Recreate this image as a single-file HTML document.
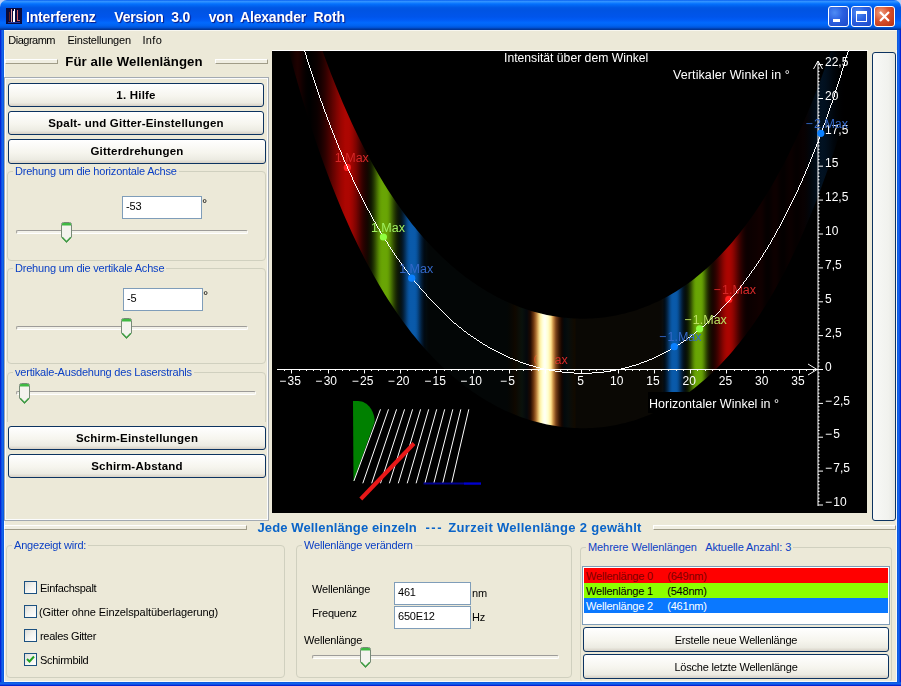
<!DOCTYPE html>
<html><head><meta charset="utf-8"><title>Interferenz</title>
<style>
*{box-sizing:border-box;margin:0;padding:0}
html,body{width:901px;height:686px;overflow:hidden}
body{position:relative;background:#ece9d8;font-family:"Liberation Sans",sans-serif;font-size:11px;color:#000}
.abs{position:absolute}
#title{position:absolute;left:0;top:0;width:901px;height:30px;border-radius:7px 7px 0 0;
background:linear-gradient(to bottom,#0058ee 0%,#3593ff 4%,#288eff 7%,#127dff 10%,#036ffc 14%,#0262ee 20%,#0057e5 26%,#0054e3 34%,#0055eb 56%,#005bf5 66%,#026afe 76%,#0062ef 86%,#0052d6 92%,#0040ab 96%,#003092 100%)}
#title .t{position:absolute;left:26px;top:9px;color:#fff;font-weight:bold;font-size:14px;white-space:pre;text-shadow:1px 1px 1px #0a1883;letter-spacing:-0.17px}
#bl{position:absolute;left:0;top:30px;width:4px;height:656px;background:linear-gradient(to right,#0019cf 0,#0831d9 25%,#166aee 50%,#0855dd 100%)}
#br{position:absolute;left:897px;top:30px;width:4px;height:656px;background:linear-gradient(to left,#0019cf 0,#0831d9 25%,#166aee 50%,#0855dd 100%)}
#bb{position:absolute;left:0;top:682px;width:901px;height:4px;background:linear-gradient(to top,#0019cf 0,#0831d9 25%,#166aee 50%,#0855dd 100%)}
.tb{position:absolute;top:6px;width:21px;height:21px;border:1px solid #fff;border-radius:3px;
background:radial-gradient(circle at 30% 30%,#4e8cf5 0%,#2a5fe0 45%,#1c48c8 100%)}
.tb.x{background:radial-gradient(circle at 30% 30%,#f0a080 0%,#d8502c 45%,#b83010 100%)}
#menu{position:absolute;left:4px;top:30px;width:893px;height:20px;background:#ece9d8;border-top:1px solid #f8f7f0}
#menu span{position:absolute;top:3px;font-size:11px}
.btn{position:absolute;border:1px solid #0c3360;border-radius:3px;background:linear-gradient(to bottom,#fff 0%,#f6f5ee 55%,#ecebe2 85%,#d6d0c5 100%);
text-align:center;font-weight:bold;font-size:11.5px;letter-spacing:0.2px;white-space:nowrap}
.btn.r{font-weight:normal;font-size:11px;letter-spacing:-0.2px;padding-top:1px}
.gb{position:absolute;border:1px solid #d0d0bf;border-radius:4px}
.gb>.l{position:absolute;left:5px;top:-8px;background:#ece9d8;padding:0 2px 0 2px;color:#0c40c4;font-size:11px;white-space:pre;line-height:14px;letter-spacing:-0.2px}
.inp{position:absolute;background:#fff;border:1px solid #7f9db9;font-size:11px;padding:3px 0 0 3px;letter-spacing:-0.2px}
.trk{position:absolute;height:4px;border:1px solid #9d9c99;border-bottom-color:#fff;border-right-color:#fff;border-radius:2px;background:#f3f2ea}
.th{position:absolute;width:11px;height:21px}
.cb{position:absolute;width:13px;height:13px;border:1px solid #1c5180;background:linear-gradient(135deg,#dcdcd7 0%,#f3f3ef 50%,#fff 100%)}
.lb{position:absolute;white-space:nowrap;font-size:11px;letter-spacing:-0.2px}
.bh{top:520px;font-weight:bold;font-size:13px;color:#0a64c8;white-space:pre}
.etch{position:absolute;height:5px;border-top:1px solid #fff;border-left:1px solid #fff;border-bottom:1px solid #a09c88;border-right:1px solid #a09c88;background:#f0eee2}
</style></head><body>
<div class="abs" style="left:0;top:0;width:901px;height:10px;background:#b9cef6"></div><div id="title">
<svg class="abs" style="left:6px;top:8px" width="16" height="16"><rect width="16" height="16" fill="#0a0a3c"/><rect x="5" y="1" width="1" height="13" fill="#e8a0a0"/><rect x="7" y="3" width="2" height="11" fill="#fff"/><rect x="8" y="1" width="1" height="3" fill="#fff"/><rect x="11" y="2" width="1" height="11" fill="#d06060"/><rect x="12" y="12" width="2" height="1" fill="#d06060"/><rect x="2" y="14" width="12" height="1" fill="#2838a0"/><rect x="3" y="4" width="1" height="9" fill="#602020"/></svg>
<div class="t">Interferenz     Version  3.0     von  Alexander  Roth</div>
<div class="tb" style="left:828px"><div class="abs" style="left:4px;top:12px;width:7px;height:3px;background:#fff"></div></div>
<div class="tb" style="left:851px"><div class="abs" style="left:4px;top:4px;width:11px;height:11px;border:1px solid #fff;border-top-width:3px"></div></div>
<div class="tb x" style="left:874px"><svg class="abs" style="left:0;top:0" width="19" height="19"><path d="M5 5 L14 14 M14 5 L5 14" stroke="#fff" stroke-width="2.2"/></svg></div>
</div>
<div class="abs" style="left:4px;top:30px;width:1px;height:652px;background:#f6f8fc"></div><div class="abs" style="left:896px;top:30px;width:1px;height:652px;background:#f6f8fc"></div><div class="abs" style="left:4px;top:681px;width:893px;height:1px;background:#f6f8fc"></div><div id="bl"></div><div id="br"></div><div id="bb"></div>
<div class="abs" style="left:5px;top:49px;width:891px;height:1px;background:#f7f6ef"></div><div id="menu"><span style="left:4.3px;letter-spacing:-0.5px">Diagramm</span><span style="left:63.4px;letter-spacing:-0.2px">Einstellungen</span><span style="left:138.4px;letter-spacing:0.4px">Info</span></div>

<!-- left heading -->
<div class="etch" style="left:5px;top:59px;width:53px"></div>
<div class="etch" style="left:215px;top:59px;width:53px"></div>
<div class="abs" style="left:2px;top:54px;width:264px;text-align:center;font-weight:bold;font-size:13.2px;letter-spacing:0.1px">Für alle Wellenlängen</div>
<!-- left panel -->
<div class="abs" style="left:4px;top:77px;width:265px;height:444px;border:1px solid #a3aab2;box-shadow:inset 0 0 0 1px #fbfcfd"></div>
<div class="btn" style="left:8px;top:83px;width:256px;height:24px;line-height:22px">1. Hilfe</div>
<div class="btn" style="left:8px;top:111px;width:256px;height:24px;line-height:22px">Spalt- und Gitter-Einstellungen</div>
<div class="btn" style="left:8px;top:139px;width:258px;height:25px;line-height:23px">Gitterdrehungen</div>

<div class="gb" style="left:7px;top:171px;width:259px;height:90px"><div class="l">Drehung um die horizontale Achse</div></div>
<div class="inp" style="left:122px;top:196px;width:80px;height:23px">-53</div>
<div class="lb" style="left:202px;top:196px;font-size:13px">°</div>
<div class="trk" style="left:16px;top:230px;width:232px"></div>
<svg class="th" style="left:61px;top:222px" viewBox="0 0 11 21"><path d="M0.5 2.5 Q0.5 0.5 2.5 0.5 H8.5 Q10.5 0.5 10.5 2.5 V15 L5.5 20.5 L0.5 15 Z" fill="#f4f3ee" stroke="#778a77"/><path d="M1 3 V1.5 Q1 1 2 1 H9 Q10 1 10 1.5 V3.5 H1Z" fill="#3fb843"/><path d="M1.2 15.2 L5.5 19.8 L9.8 15.2" stroke="#3fa043" fill="none" stroke-width="1.4"/></svg>

<div class="gb" style="left:7px;top:268px;width:259px;height:96px"><div class="l">Drehung um die vertikale Achse</div></div>
<div class="inp" style="left:123px;top:288px;width:80px;height:23px">-5</div>
<div class="lb" style="left:203px;top:288px;font-size:13px">°</div>
<div class="trk" style="left:16px;top:326px;width:232px"></div>
<svg class="th" style="left:121px;top:318px" viewBox="0 0 11 21"><path d="M0.5 2.5 Q0.5 0.5 2.5 0.5 H8.5 Q10.5 0.5 10.5 2.5 V15 L5.5 20.5 L0.5 15 Z" fill="#f4f3ee" stroke="#778a77"/><path d="M1 3 V1.5 Q1 1 2 1 H9 Q10 1 10 1.5 V3.5 H1Z" fill="#3fb843"/><path d="M1.2 15.2 L5.5 19.8 L9.8 15.2" stroke="#3fa043" fill="none" stroke-width="1.4"/></svg>

<div class="gb" style="left:7px;top:372px;width:259px;height:60px"><div class="l">vertikale-Ausdehung des Laserstrahls</div></div>
<div class="trk" style="left:16px;top:391px;width:240px"></div>
<svg class="th" style="left:19px;top:383px" viewBox="0 0 11 21"><path d="M0.5 2.5 Q0.5 0.5 2.5 0.5 H8.5 Q10.5 0.5 10.5 2.5 V15 L5.5 20.5 L0.5 15 Z" fill="#f4f3ee" stroke="#778a77"/><path d="M1 3 V1.5 Q1 1 2 1 H9 Q10 1 10 1.5 V3.5 H1Z" fill="#3fb843"/><path d="M1.2 15.2 L5.5 19.8 L9.8 15.2" stroke="#3fa043" fill="none" stroke-width="1.4"/></svg>
<div class="abs" style="left:6px;top:422px;width:261px;height:12px;background:#ece9d8"></div>
<div class="btn" style="left:8px;top:426px;width:258px;height:24px;line-height:22px">Schirm-Einstellungen</div>
<div class="btn" style="left:8px;top:454px;width:258px;height:24px;line-height:22px">Schirm-Abstand</div>

<svg id="cv" width="595" height="462" viewBox="0 0 595 462" style="position:absolute;left:272px;top:51px;background:#000;font-family:'Liberation Sans',sans-serif;font-size:12px" fill="#fff">
<defs><linearGradient id="sp" gradientUnits="userSpaceOnUse" x1="0" y1="0" x2="595" y2="0"><stop offset="0.0000" stop-color="#000000"/><stop offset="0.0017" stop-color="#000000"/><stop offset="0.0034" stop-color="#000000"/><stop offset="0.0050" stop-color="#000000"/><stop offset="0.0067" stop-color="#000000"/><stop offset="0.0084" stop-color="#000000"/><stop offset="0.0101" stop-color="#000000"/><stop offset="0.0118" stop-color="#000000"/><stop offset="0.0134" stop-color="#000000"/><stop offset="0.0151" stop-color="#000000"/><stop offset="0.0168" stop-color="#000000"/><stop offset="0.0185" stop-color="#000000"/><stop offset="0.0202" stop-color="#000000"/><stop offset="0.0218" stop-color="#000000"/><stop offset="0.0235" stop-color="#010000"/><stop offset="0.0252" stop-color="#010000"/><stop offset="0.0269" stop-color="#030000"/><stop offset="0.0286" stop-color="#040000"/><stop offset="0.0303" stop-color="#070000"/><stop offset="0.0319" stop-color="#0a0000"/><stop offset="0.0336" stop-color="#0d0000"/><stop offset="0.0353" stop-color="#110000"/><stop offset="0.0370" stop-color="#150000"/><stop offset="0.0387" stop-color="#190000"/><stop offset="0.0403" stop-color="#1b0000"/><stop offset="0.0420" stop-color="#1d0100"/><stop offset="0.0437" stop-color="#1d0100"/><stop offset="0.0454" stop-color="#1b0000"/><stop offset="0.0471" stop-color="#190000"/><stop offset="0.0487" stop-color="#150000"/><stop offset="0.0504" stop-color="#110000"/><stop offset="0.0521" stop-color="#0d0000"/><stop offset="0.0538" stop-color="#0a0000"/><stop offset="0.0555" stop-color="#070000"/><stop offset="0.0571" stop-color="#040000"/><stop offset="0.0588" stop-color="#030000"/><stop offset="0.0605" stop-color="#010000"/><stop offset="0.0622" stop-color="#010000"/><stop offset="0.0639" stop-color="#000000"/><stop offset="0.0655" stop-color="#020000"/><stop offset="0.0672" stop-color="#030000"/><stop offset="0.0689" stop-color="#050000"/><stop offset="0.0706" stop-color="#060000"/><stop offset="0.0723" stop-color="#080000"/><stop offset="0.0739" stop-color="#090000"/><stop offset="0.0756" stop-color="#0b0000"/><stop offset="0.0773" stop-color="#0e0000"/><stop offset="0.0790" stop-color="#110000"/><stop offset="0.0807" stop-color="#140000"/><stop offset="0.0824" stop-color="#180000"/><stop offset="0.0840" stop-color="#1c0100"/><stop offset="0.0857" stop-color="#210100"/><stop offset="0.0874" stop-color="#260100"/><stop offset="0.0891" stop-color="#2c0100"/><stop offset="0.0908" stop-color="#320100"/><stop offset="0.0924" stop-color="#390100"/><stop offset="0.0941" stop-color="#3f0200"/><stop offset="0.0958" stop-color="#460200"/><stop offset="0.0975" stop-color="#4d0200"/><stop offset="0.0992" stop-color="#540200"/><stop offset="0.1008" stop-color="#5b0301"/><stop offset="0.1025" stop-color="#630301"/><stop offset="0.1042" stop-color="#6a0301"/><stop offset="0.1059" stop-color="#710301"/><stop offset="0.1076" stop-color="#790401"/><stop offset="0.1092" stop-color="#800401"/><stop offset="0.1109" stop-color="#870401"/><stop offset="0.1126" stop-color="#8d0401"/><stop offset="0.1143" stop-color="#940501"/><stop offset="0.1160" stop-color="#9a0501"/><stop offset="0.1176" stop-color="#9f0501"/><stop offset="0.1193" stop-color="#a30501"/><stop offset="0.1210" stop-color="#a70501"/><stop offset="0.1227" stop-color="#ac0602"/><stop offset="0.1244" stop-color="#ac0602"/><stop offset="0.1261" stop-color="#ac0602"/><stop offset="0.1277" stop-color="#ac0602"/><stop offset="0.1294" stop-color="#ac0602"/><stop offset="0.1311" stop-color="#a90501"/><stop offset="0.1328" stop-color="#a30501"/><stop offset="0.1345" stop-color="#9d0501"/><stop offset="0.1361" stop-color="#960501"/><stop offset="0.1378" stop-color="#8d0401"/><stop offset="0.1395" stop-color="#840401"/><stop offset="0.1412" stop-color="#7b0401"/><stop offset="0.1429" stop-color="#700301"/><stop offset="0.1445" stop-color="#640301"/><stop offset="0.1462" stop-color="#590301"/><stop offset="0.1479" stop-color="#4d0200"/><stop offset="0.1496" stop-color="#420200"/><stop offset="0.1513" stop-color="#370200"/><stop offset="0.1529" stop-color="#2e0200"/><stop offset="0.1546" stop-color="#270200"/><stop offset="0.1563" stop-color="#200300"/><stop offset="0.1580" stop-color="#1b0400"/><stop offset="0.1597" stop-color="#160500"/><stop offset="0.1613" stop-color="#120800"/><stop offset="0.1630" stop-color="#100c00"/><stop offset="0.1647" stop-color="#0f1100"/><stop offset="0.1664" stop-color="#0f1800"/><stop offset="0.1681" stop-color="#152201"/><stop offset="0.1697" stop-color="#1d2d01"/><stop offset="0.1714" stop-color="#253b01"/><stop offset="0.1731" stop-color="#2f4a02"/><stop offset="0.1748" stop-color="#3a5b02"/><stop offset="0.1765" stop-color="#456c03"/><stop offset="0.1782" stop-color="#4f7d03"/><stop offset="0.1798" stop-color="#598c04"/><stop offset="0.1815" stop-color="#619804"/><stop offset="0.1832" stop-color="#66a004"/><stop offset="0.1849" stop-color="#68a404"/><stop offset="0.1866" stop-color="#69a505"/><stop offset="0.1882" stop-color="#69a505"/><stop offset="0.1899" stop-color="#69a505"/><stop offset="0.1916" stop-color="#69a505"/><stop offset="0.1933" stop-color="#68a304"/><stop offset="0.1950" stop-color="#649e04"/><stop offset="0.1966" stop-color="#5e9404"/><stop offset="0.1983" stop-color="#558604"/><stop offset="0.2000" stop-color="#4b7603"/><stop offset="0.2017" stop-color="#406503"/><stop offset="0.2034" stop-color="#355402"/><stop offset="0.2050" stop-color="#2b4402"/><stop offset="0.2067" stop-color="#223602"/><stop offset="0.2084" stop-color="#1a2903"/><stop offset="0.2101" stop-color="#131f04"/><stop offset="0.2118" stop-color="#0e1806"/><stop offset="0.2134" stop-color="#0a140a"/><stop offset="0.2151" stop-color="#07120f"/><stop offset="0.2168" stop-color="#051318"/><stop offset="0.2185" stop-color="#041623"/><stop offset="0.2202" stop-color="#041d32"/><stop offset="0.2218" stop-color="#042544"/><stop offset="0.2235" stop-color="#052f58"/><stop offset="0.2252" stop-color="#063a6d"/><stop offset="0.2269" stop-color="#074582"/><stop offset="0.2286" stop-color="#084e94"/><stop offset="0.2303" stop-color="#0955a1"/><stop offset="0.2319" stop-color="#0959a9"/><stop offset="0.2336" stop-color="#0a5aaa"/><stop offset="0.2353" stop-color="#0a5aaa"/><stop offset="0.2370" stop-color="#0a5aaa"/><stop offset="0.2387" stop-color="#0a5aaa"/><stop offset="0.2403" stop-color="#0959a9"/><stop offset="0.2420" stop-color="#0955a1"/><stop offset="0.2437" stop-color="#084e94"/><stop offset="0.2454" stop-color="#074482"/><stop offset="0.2471" stop-color="#06396d"/><stop offset="0.2487" stop-color="#052e58"/><stop offset="0.2504" stop-color="#032343"/><stop offset="0.2521" stop-color="#021a32"/><stop offset="0.2538" stop-color="#021223"/><stop offset="0.2555" stop-color="#010c17"/><stop offset="0.2571" stop-color="#00080f"/><stop offset="0.2588" stop-color="#030b0f"/><stop offset="0.2605" stop-color="#03090b"/><stop offset="0.2622" stop-color="#030709"/><stop offset="0.2639" stop-color="#030607"/><stop offset="0.2655" stop-color="#030606"/><stop offset="0.2672" stop-color="#030606"/><stop offset="0.2689" stop-color="#030606"/><stop offset="0.2706" stop-color="#030606"/><stop offset="0.2723" stop-color="#030606"/><stop offset="0.2739" stop-color="#030606"/><stop offset="0.2756" stop-color="#030606"/><stop offset="0.2773" stop-color="#030606"/><stop offset="0.2790" stop-color="#030606"/><stop offset="0.2807" stop-color="#030606"/><stop offset="0.2824" stop-color="#030606"/><stop offset="0.2840" stop-color="#030606"/><stop offset="0.2857" stop-color="#030606"/><stop offset="0.2874" stop-color="#030606"/><stop offset="0.2891" stop-color="#030606"/><stop offset="0.2908" stop-color="#030606"/><stop offset="0.2924" stop-color="#030606"/><stop offset="0.2941" stop-color="#030606"/><stop offset="0.2958" stop-color="#030606"/><stop offset="0.2975" stop-color="#030606"/><stop offset="0.2992" stop-color="#030606"/><stop offset="0.3008" stop-color="#030606"/><stop offset="0.3025" stop-color="#030606"/><stop offset="0.3042" stop-color="#030606"/><stop offset="0.3059" stop-color="#030606"/><stop offset="0.3076" stop-color="#030606"/><stop offset="0.3092" stop-color="#030606"/><stop offset="0.3109" stop-color="#030606"/><stop offset="0.3126" stop-color="#030606"/><stop offset="0.3143" stop-color="#030606"/><stop offset="0.3160" stop-color="#030606"/><stop offset="0.3176" stop-color="#030606"/><stop offset="0.3193" stop-color="#030606"/><stop offset="0.3210" stop-color="#030606"/><stop offset="0.3227" stop-color="#030606"/><stop offset="0.3244" stop-color="#030606"/><stop offset="0.3261" stop-color="#030606"/><stop offset="0.3277" stop-color="#030606"/><stop offset="0.3294" stop-color="#030606"/><stop offset="0.3311" stop-color="#030606"/><stop offset="0.3328" stop-color="#030606"/><stop offset="0.3345" stop-color="#030606"/><stop offset="0.3361" stop-color="#030606"/><stop offset="0.3378" stop-color="#030606"/><stop offset="0.3395" stop-color="#030606"/><stop offset="0.3412" stop-color="#030606"/><stop offset="0.3429" stop-color="#030606"/><stop offset="0.3445" stop-color="#030606"/><stop offset="0.3462" stop-color="#030606"/><stop offset="0.3479" stop-color="#030606"/><stop offset="0.3496" stop-color="#030606"/><stop offset="0.3513" stop-color="#030606"/><stop offset="0.3529" stop-color="#030606"/><stop offset="0.3546" stop-color="#030606"/><stop offset="0.3563" stop-color="#030606"/><stop offset="0.3580" stop-color="#030606"/><stop offset="0.3597" stop-color="#030606"/><stop offset="0.3613" stop-color="#030606"/><stop offset="0.3630" stop-color="#030606"/><stop offset="0.3647" stop-color="#030606"/><stop offset="0.3664" stop-color="#030606"/><stop offset="0.3681" stop-color="#030606"/><stop offset="0.3697" stop-color="#030606"/><stop offset="0.3714" stop-color="#030606"/><stop offset="0.3731" stop-color="#030606"/><stop offset="0.3748" stop-color="#030606"/><stop offset="0.3765" stop-color="#030606"/><stop offset="0.3782" stop-color="#030606"/><stop offset="0.3798" stop-color="#030606"/><stop offset="0.3815" stop-color="#030606"/><stop offset="0.3832" stop-color="#030606"/><stop offset="0.3849" stop-color="#030606"/><stop offset="0.3866" stop-color="#030606"/><stop offset="0.3882" stop-color="#030606"/><stop offset="0.3899" stop-color="#030606"/><stop offset="0.3916" stop-color="#030606"/><stop offset="0.3933" stop-color="#030606"/><stop offset="0.3950" stop-color="#030606"/><stop offset="0.3966" stop-color="#040605"/><stop offset="0.3983" stop-color="#050604"/><stop offset="0.4000" stop-color="#060603"/><stop offset="0.4017" stop-color="#080703"/><stop offset="0.4034" stop-color="#090702"/><stop offset="0.4050" stop-color="#0b0701"/><stop offset="0.4067" stop-color="#0d0700"/><stop offset="0.4084" stop-color="#0f0800"/><stop offset="0.4101" stop-color="#0e0901"/><stop offset="0.4118" stop-color="#0d0a03"/><stop offset="0.4134" stop-color="#0c0c05"/><stop offset="0.4151" stop-color="#0c0d07"/><stop offset="0.4168" stop-color="#0b0f08"/><stop offset="0.4185" stop-color="#0a100a"/><stop offset="0.4202" stop-color="#09110c"/><stop offset="0.4218" stop-color="#080f0c"/><stop offset="0.4235" stop-color="#070d0c"/><stop offset="0.4252" stop-color="#060b0c"/><stop offset="0.4269" stop-color="#05090c"/><stop offset="0.4286" stop-color="#05080c"/><stop offset="0.4303" stop-color="#0c0808"/><stop offset="0.4319" stop-color="#140804"/><stop offset="0.4336" stop-color="#1b0801"/><stop offset="0.4353" stop-color="#2e1103"/><stop offset="0.4370" stop-color="#461f07"/><stop offset="0.4387" stop-color="#5d2d0b"/><stop offset="0.4403" stop-color="#763e13"/><stop offset="0.4420" stop-color="#915723"/><stop offset="0.4437" stop-color="#ab7032"/><stop offset="0.4454" stop-color="#c5904a"/><stop offset="0.4471" stop-color="#deb365"/><stop offset="0.4487" stop-color="#eed183"/><stop offset="0.4504" stop-color="#fbeca1"/><stop offset="0.4521" stop-color="#fff7b8"/><stop offset="0.4538" stop-color="#fffbcc"/><stop offset="0.4555" stop-color="#ffffe1"/><stop offset="0.4571" stop-color="#ffffeb"/><stop offset="0.4588" stop-color="#fffff5"/><stop offset="0.4605" stop-color="#ffffe8"/><stop offset="0.4622" stop-color="#ffffdc"/><stop offset="0.4639" stop-color="#ffffd0"/><stop offset="0.4655" stop-color="#fff7bd"/><stop offset="0.4672" stop-color="#ffeda7"/><stop offset="0.4689" stop-color="#ffe491"/><stop offset="0.4706" stop-color="#e8be6f"/><stop offset="0.4723" stop-color="#d1984e"/><stop offset="0.4739" stop-color="#b47a3a"/><stop offset="0.4756" stop-color="#965d29"/><stop offset="0.4773" stop-color="#784119"/><stop offset="0.4790" stop-color="#643312"/><stop offset="0.4807" stop-color="#50260b"/><stop offset="0.4824" stop-color="#3c1905"/><stop offset="0.4840" stop-color="#2d1103"/><stop offset="0.4857" stop-color="#1e0a01"/><stop offset="0.4874" stop-color="#120501"/><stop offset="0.4891" stop-color="#0b0706"/><stop offset="0.4908" stop-color="#04090a"/><stop offset="0.4924" stop-color="#030a0c"/><stop offset="0.4941" stop-color="#050b0c"/><stop offset="0.4958" stop-color="#060c0c"/><stop offset="0.4975" stop-color="#070d0c"/><stop offset="0.4992" stop-color="#090d0a"/><stop offset="0.5008" stop-color="#0a0c08"/><stop offset="0.5025" stop-color="#0c0c07"/><stop offset="0.5042" stop-color="#0d0b05"/><stop offset="0.5059" stop-color="#0f0b03"/><stop offset="0.5076" stop-color="#100a01"/><stop offset="0.5092" stop-color="#120a00"/><stop offset="0.5109" stop-color="#0a0804"/><stop offset="0.5126" stop-color="#0a0804"/><stop offset="0.5143" stop-color="#0a0804"/><stop offset="0.5160" stop-color="#0a0804"/><stop offset="0.5176" stop-color="#0a0804"/><stop offset="0.5193" stop-color="#0a0804"/><stop offset="0.5210" stop-color="#0a0804"/><stop offset="0.5227" stop-color="#0a0804"/><stop offset="0.5244" stop-color="#0a0804"/><stop offset="0.5261" stop-color="#0a0804"/><stop offset="0.5277" stop-color="#0a0804"/><stop offset="0.5294" stop-color="#0a0804"/><stop offset="0.5311" stop-color="#0a0804"/><stop offset="0.5328" stop-color="#0a0804"/><stop offset="0.5345" stop-color="#0a0804"/><stop offset="0.5361" stop-color="#0a0804"/><stop offset="0.5378" stop-color="#0a0804"/><stop offset="0.5395" stop-color="#0a0804"/><stop offset="0.5412" stop-color="#0a0804"/><stop offset="0.5429" stop-color="#0a0804"/><stop offset="0.5445" stop-color="#0a0804"/><stop offset="0.5462" stop-color="#0a0804"/><stop offset="0.5479" stop-color="#0a0804"/><stop offset="0.5496" stop-color="#0a0804"/><stop offset="0.5513" stop-color="#0a0804"/><stop offset="0.5529" stop-color="#0a0804"/><stop offset="0.5546" stop-color="#0a0804"/><stop offset="0.5563" stop-color="#0a0804"/><stop offset="0.5580" stop-color="#0a0804"/><stop offset="0.5597" stop-color="#0a0804"/><stop offset="0.5613" stop-color="#0a0804"/><stop offset="0.5630" stop-color="#0a0804"/><stop offset="0.5647" stop-color="#0a0804"/><stop offset="0.5664" stop-color="#0a0804"/><stop offset="0.5681" stop-color="#0a0804"/><stop offset="0.5697" stop-color="#0a0804"/><stop offset="0.5714" stop-color="#0a0804"/><stop offset="0.5731" stop-color="#0a0804"/><stop offset="0.5748" stop-color="#0a0804"/><stop offset="0.5765" stop-color="#0a0804"/><stop offset="0.5782" stop-color="#0a0804"/><stop offset="0.5798" stop-color="#0a0804"/><stop offset="0.5815" stop-color="#0a0804"/><stop offset="0.5832" stop-color="#0a0804"/><stop offset="0.5849" stop-color="#0a0804"/><stop offset="0.5866" stop-color="#0a0804"/><stop offset="0.5882" stop-color="#0a0804"/><stop offset="0.5899" stop-color="#0a0804"/><stop offset="0.5916" stop-color="#0a0804"/><stop offset="0.5933" stop-color="#0a0804"/><stop offset="0.5950" stop-color="#0a0804"/><stop offset="0.5966" stop-color="#0a0804"/><stop offset="0.5983" stop-color="#0a0804"/><stop offset="0.6000" stop-color="#0a0804"/><stop offset="0.6017" stop-color="#0a0804"/><stop offset="0.6034" stop-color="#0a0804"/><stop offset="0.6050" stop-color="#0a0804"/><stop offset="0.6067" stop-color="#0a0804"/><stop offset="0.6084" stop-color="#0a0804"/><stop offset="0.6101" stop-color="#0a0804"/><stop offset="0.6118" stop-color="#0a0804"/><stop offset="0.6134" stop-color="#0a0804"/><stop offset="0.6151" stop-color="#0a0804"/><stop offset="0.6168" stop-color="#0a0804"/><stop offset="0.6185" stop-color="#0a0804"/><stop offset="0.6202" stop-color="#0a0804"/><stop offset="0.6218" stop-color="#0a0804"/><stop offset="0.6235" stop-color="#0a0804"/><stop offset="0.6252" stop-color="#0a0804"/><stop offset="0.6269" stop-color="#0a0804"/><stop offset="0.6286" stop-color="#0a0804"/><stop offset="0.6303" stop-color="#0a0804"/><stop offset="0.6319" stop-color="#0a0804"/><stop offset="0.6336" stop-color="#0a0804"/><stop offset="0.6353" stop-color="#0a0804"/><stop offset="0.6370" stop-color="#0a0804"/><stop offset="0.6387" stop-color="#0a0804"/><stop offset="0.6403" stop-color="#0a0804"/><stop offset="0.6420" stop-color="#0a0804"/><stop offset="0.6437" stop-color="#0a0804"/><stop offset="0.6454" stop-color="#0a0804"/><stop offset="0.6471" stop-color="#0a0804"/><stop offset="0.6487" stop-color="#0a0804"/><stop offset="0.6504" stop-color="#0a0804"/><stop offset="0.6521" stop-color="#0a0805"/><stop offset="0.6538" stop-color="#0a0907"/><stop offset="0.6555" stop-color="#0a0b0a"/><stop offset="0.6571" stop-color="#0a0d0f"/><stop offset="0.6588" stop-color="#010a12"/><stop offset="0.6605" stop-color="#01101e"/><stop offset="0.6622" stop-color="#02182d"/><stop offset="0.6639" stop-color="#032241"/><stop offset="0.6655" stop-color="#052e58"/><stop offset="0.6672" stop-color="#063b70"/><stop offset="0.6689" stop-color="#084888"/><stop offset="0.6706" stop-color="#09529b"/><stop offset="0.6723" stop-color="#0958a6"/><stop offset="0.6739" stop-color="#0a5aaa"/><stop offset="0.6756" stop-color="#0a5aaa"/><stop offset="0.6773" stop-color="#0a5aaa"/><stop offset="0.6790" stop-color="#0959a9"/><stop offset="0.6807" stop-color="#0956a3"/><stop offset="0.6824" stop-color="#084e94"/><stop offset="0.6840" stop-color="#07437f"/><stop offset="0.6857" stop-color="#063667"/><stop offset="0.6874" stop-color="#052a4f"/><stop offset="0.6891" stop-color="#041f39"/><stop offset="0.6908" stop-color="#031627"/><stop offset="0.6924" stop-color="#041119"/><stop offset="0.6941" stop-color="#050f0f"/><stop offset="0.6958" stop-color="#081009"/><stop offset="0.6975" stop-color="#0c1605"/><stop offset="0.6992" stop-color="#131f03"/><stop offset="0.7008" stop-color="#1b2c02"/><stop offset="0.7025" stop-color="#263d02"/><stop offset="0.7042" stop-color="#335002"/><stop offset="0.7059" stop-color="#416603"/><stop offset="0.7076" stop-color="#4e7b03"/><stop offset="0.7092" stop-color="#5a8e04"/><stop offset="0.7109" stop-color="#639c04"/><stop offset="0.7126" stop-color="#68a404"/><stop offset="0.7143" stop-color="#69a505"/><stop offset="0.7160" stop-color="#69a505"/><stop offset="0.7176" stop-color="#69a505"/><stop offset="0.7193" stop-color="#69a505"/><stop offset="0.7210" stop-color="#68a404"/><stop offset="0.7227" stop-color="#639c04"/><stop offset="0.7244" stop-color="#5a8e04"/><stop offset="0.7261" stop-color="#4e7b03"/><stop offset="0.7277" stop-color="#416603"/><stop offset="0.7294" stop-color="#335002"/><stop offset="0.7311" stop-color="#2a3c01"/><stop offset="0.7328" stop-color="#212b01"/><stop offset="0.7345" stop-color="#1a1e00"/><stop offset="0.7361" stop-color="#171300"/><stop offset="0.7378" stop-color="#160c00"/><stop offset="0.7395" stop-color="#170700"/><stop offset="0.7412" stop-color="#1b0400"/><stop offset="0.7429" stop-color="#200300"/><stop offset="0.7445" stop-color="#280200"/><stop offset="0.7462" stop-color="#300200"/><stop offset="0.7479" stop-color="#3b0200"/><stop offset="0.7496" stop-color="#460200"/><stop offset="0.7513" stop-color="#530200"/><stop offset="0.7529" stop-color="#600301"/><stop offset="0.7546" stop-color="#6d0301"/><stop offset="0.7563" stop-color="#7a0401"/><stop offset="0.7580" stop-color="#870401"/><stop offset="0.7597" stop-color="#920501"/><stop offset="0.7613" stop-color="#9c0501"/><stop offset="0.7630" stop-color="#a40501"/><stop offset="0.7647" stop-color="#a90501"/><stop offset="0.7664" stop-color="#ab0501"/><stop offset="0.7681" stop-color="#ab0501"/><stop offset="0.7697" stop-color="#a80501"/><stop offset="0.7714" stop-color="#a20501"/><stop offset="0.7731" stop-color="#9a0501"/><stop offset="0.7748" stop-color="#900501"/><stop offset="0.7765" stop-color="#840401"/><stop offset="0.7782" stop-color="#780401"/><stop offset="0.7798" stop-color="#6a0301"/><stop offset="0.7815" stop-color="#5d0301"/><stop offset="0.7832" stop-color="#500200"/><stop offset="0.7849" stop-color="#440200"/><stop offset="0.7866" stop-color="#380100"/><stop offset="0.7882" stop-color="#2e0100"/><stop offset="0.7899" stop-color="#250100"/><stop offset="0.7916" stop-color="#1d0100"/><stop offset="0.7933" stop-color="#170000"/><stop offset="0.7950" stop-color="#120000"/><stop offset="0.7966" stop-color="#0e0000"/><stop offset="0.7983" stop-color="#0c0000"/><stop offset="0.8000" stop-color="#0b0000"/><stop offset="0.8017" stop-color="#0b0000"/><stop offset="0.8034" stop-color="#0c0000"/><stop offset="0.8050" stop-color="#0b0000"/><stop offset="0.8067" stop-color="#0c0000"/><stop offset="0.8084" stop-color="#0d0000"/><stop offset="0.8101" stop-color="#0d0000"/><stop offset="0.8118" stop-color="#0e0000"/><stop offset="0.8134" stop-color="#0e0000"/><stop offset="0.8151" stop-color="#0f0000"/><stop offset="0.8168" stop-color="#100000"/><stop offset="0.8185" stop-color="#110000"/><stop offset="0.8202" stop-color="#110000"/><stop offset="0.8218" stop-color="#100000"/><stop offset="0.8235" stop-color="#0f0000"/><stop offset="0.8252" stop-color="#0d0000"/><stop offset="0.8269" stop-color="#0a0000"/><stop offset="0.8286" stop-color="#080000"/><stop offset="0.8303" stop-color="#060000"/><stop offset="0.8319" stop-color="#050000"/><stop offset="0.8336" stop-color="#050000"/><stop offset="0.8353" stop-color="#050000"/><stop offset="0.8370" stop-color="#070000"/><stop offset="0.8387" stop-color="#080000"/><stop offset="0.8403" stop-color="#0a0000"/><stop offset="0.8420" stop-color="#0c0000"/><stop offset="0.8437" stop-color="#0d0000"/><stop offset="0.8454" stop-color="#0d0000"/><stop offset="0.8471" stop-color="#0d0000"/><stop offset="0.8487" stop-color="#0c0000"/><stop offset="0.8504" stop-color="#0a0000"/><stop offset="0.8521" stop-color="#080000"/><stop offset="0.8538" stop-color="#060000"/><stop offset="0.8555" stop-color="#050000"/><stop offset="0.8571" stop-color="#040000"/><stop offset="0.8588" stop-color="#040000"/><stop offset="0.8605" stop-color="#040000"/><stop offset="0.8622" stop-color="#050000"/><stop offset="0.8639" stop-color="#070000"/><stop offset="0.8655" stop-color="#080000"/><stop offset="0.8672" stop-color="#090000"/><stop offset="0.8689" stop-color="#0a0000"/><stop offset="0.8706" stop-color="#0b0000"/><stop offset="0.8723" stop-color="#0a0000"/><stop offset="0.8739" stop-color="#0a0000"/><stop offset="0.8756" stop-color="#080000"/><stop offset="0.8773" stop-color="#070000"/><stop offset="0.8790" stop-color="#060000"/><stop offset="0.8807" stop-color="#050000"/><stop offset="0.8824" stop-color="#050000"/><stop offset="0.8840" stop-color="#050000"/><stop offset="0.8857" stop-color="#060000"/><stop offset="0.8874" stop-color="#070000"/><stop offset="0.8891" stop-color="#070001"/><stop offset="0.8908" stop-color="#080101"/><stop offset="0.8924" stop-color="#080102"/><stop offset="0.8941" stop-color="#080102"/><stop offset="0.8958" stop-color="#070203"/><stop offset="0.8975" stop-color="#060204"/><stop offset="0.8992" stop-color="#050305"/><stop offset="0.9008" stop-color="#040407"/><stop offset="0.9025" stop-color="#030409"/><stop offset="0.9042" stop-color="#02050b"/><stop offset="0.9059" stop-color="#01070d"/><stop offset="0.9076" stop-color="#01080f"/><stop offset="0.9092" stop-color="#010912"/><stop offset="0.9109" stop-color="#010a14"/><stop offset="0.9126" stop-color="#010c17"/><stop offset="0.9143" stop-color="#010d19"/><stop offset="0.9160" stop-color="#010e1b"/><stop offset="0.9176" stop-color="#010f1e"/><stop offset="0.9193" stop-color="#01101f"/><stop offset="0.9210" stop-color="#011120"/><stop offset="0.9227" stop-color="#011121"/><stop offset="0.9244" stop-color="#021222"/><stop offset="0.9261" stop-color="#011121"/><stop offset="0.9277" stop-color="#011120"/><stop offset="0.9294" stop-color="#01101f"/><stop offset="0.9311" stop-color="#010f1e"/><stop offset="0.9328" stop-color="#010e1b"/><stop offset="0.9345" stop-color="#010d19"/><stop offset="0.9361" stop-color="#010c17"/><stop offset="0.9378" stop-color="#010a14"/><stop offset="0.9395" stop-color="#010912"/><stop offset="0.9412" stop-color="#00080f"/><stop offset="0.9429" stop-color="#00060d"/><stop offset="0.9445" stop-color="#00050b"/><stop offset="0.9462" stop-color="#000409"/><stop offset="0.9479" stop-color="#000307"/><stop offset="0.9496" stop-color="#000305"/><stop offset="0.9513" stop-color="#000204"/><stop offset="0.9529" stop-color="#000103"/><stop offset="0.9546" stop-color="#000102"/><stop offset="0.9563" stop-color="#000102"/><stop offset="0.9580" stop-color="#000001"/><stop offset="0.9597" stop-color="#000001"/><stop offset="0.9613" stop-color="#000000"/><stop offset="0.9630" stop-color="#000000"/><stop offset="0.9647" stop-color="#000000"/><stop offset="0.9664" stop-color="#000000"/><stop offset="0.9681" stop-color="#000000"/><stop offset="0.9697" stop-color="#000000"/><stop offset="0.9714" stop-color="#000000"/><stop offset="0.9731" stop-color="#000000"/><stop offset="0.9748" stop-color="#000000"/><stop offset="0.9765" stop-color="#000000"/><stop offset="0.9782" stop-color="#000000"/><stop offset="0.9798" stop-color="#000000"/><stop offset="0.9815" stop-color="#000000"/><stop offset="0.9832" stop-color="#000000"/><stop offset="0.9849" stop-color="#000000"/><stop offset="0.9866" stop-color="#000000"/><stop offset="0.9882" stop-color="#000000"/><stop offset="0.9899" stop-color="#000000"/><stop offset="0.9916" stop-color="#000000"/><stop offset="0.9933" stop-color="#000000"/><stop offset="0.9950" stop-color="#000000"/><stop offset="0.9966" stop-color="#000000"/><stop offset="0.9983" stop-color="#000000"/><stop offset="1.0000" stop-color="#000000"/></linearGradient>
<clipPath id="bc"><path d="M-10.0 -221.9 L-7.0 -207.9 L-4.0 -194.4 L-1.0 -181.1 L2.0 -168.3 L5.0 -155.7 L8.0 -143.5 L11.0 -131.5 L14.0 -119.9 L17.0 -108.6 L20.0 -97.5 L23.0 -86.8 L26.0 -76.3 L29.0 -66.1 L32.0 -56.1 L35.0 -46.4 L38.0 -37.0 L41.0 -27.8 L44.0 -18.8 L47.0 -10.1 L50.0 -1.6 L53.0 6.7 L56.0 14.8 L59.0 22.7 L62.0 30.3 L65.0 37.8 L68.0 45.1 L71.0 52.2 L74.0 59.1 L77.0 65.8 L80.0 72.4 L83.0 78.8 L86.0 85.0 L89.0 91.0 L92.0 96.9 L95.0 102.7 L98.0 108.3 L101.0 113.7 L104.0 119.1 L107.0 124.2 L110.0 129.3 L113.0 134.2 L116.0 138.9 L119.0 143.6 L122.0 148.1 L125.0 152.5 L128.0 156.8 L131.0 161.0 L134.0 165.1 L137.0 169.0 L140.0 172.9 L143.0 176.6 L146.0 180.2 L149.0 183.8 L152.0 187.2 L155.0 190.6 L158.0 193.8 L161.0 197.0 L164.0 200.1 L167.0 203.1 L170.0 206.0 L173.0 208.8 L176.0 211.5 L179.0 214.2 L182.0 216.8 L185.0 219.3 L188.0 221.7 L191.0 224.1 L194.0 226.4 L197.0 228.6 L200.0 230.7 L203.0 232.8 L206.0 234.8 L209.0 236.7 L212.0 238.6 L215.0 240.4 L218.0 242.1 L221.0 243.8 L224.0 245.4 L227.0 247.0 L230.0 248.4 L233.0 249.9 L236.0 251.2 L239.0 252.6 L242.0 253.8 L245.0 255.0 L248.0 256.2 L251.0 257.2 L254.0 258.3 L257.0 259.2 L260.0 260.2 L263.0 261.0 L266.0 261.8 L269.0 262.6 L272.0 263.3 L275.0 264.0 L278.0 264.6 L281.0 265.1 L284.0 265.6 L287.0 266.0 L290.0 266.4 L293.0 266.8 L296.0 267.1 L299.0 267.3 L302.0 267.5 L305.0 267.6 L308.0 267.7 L311.0 267.7 L314.0 267.7 L317.0 267.6 L320.0 267.5 L323.0 267.3 L326.0 267.0 L329.0 266.7 L332.0 266.4 L335.0 266.0 L338.0 265.5 L341.0 265.0 L344.0 264.5 L347.0 263.8 L350.0 263.1 L353.0 262.4 L356.0 261.6 L359.0 260.8 L362.0 259.9 L365.0 258.9 L368.0 257.8 L371.0 256.8 L374.0 255.6 L377.0 254.4 L380.0 253.1 L383.0 251.8 L386.0 250.4 L389.0 248.9 L392.0 247.3 L395.0 245.7 L398.0 244.0 L401.0 242.3 L404.0 240.5 L407.0 238.6 L410.0 236.6 L413.0 234.5 L416.0 232.4 L419.0 230.2 L422.0 227.9 L425.0 225.6 L428.0 223.1 L431.0 220.6 L434.0 218.0 L437.0 215.3 L440.0 212.5 L443.0 209.6 L446.0 206.6 L449.0 203.5 L452.0 200.3 L455.0 197.1 L458.0 193.7 L461.0 190.2 L464.0 186.6 L467.0 182.9 L470.0 179.1 L473.0 175.2 L476.0 171.1 L479.0 167.0 L482.0 162.7 L485.0 158.3 L488.0 153.7 L491.0 149.0 L494.0 144.2 L497.0 139.3 L500.0 134.2 L503.0 129.0 L506.0 123.6 L509.0 118.0 L512.0 112.4 L515.0 106.5 L518.0 100.5 L521.0 94.3 L524.0 88.0 L527.0 81.4 L530.0 74.7 L533.0 67.8 L536.0 60.8 L539.0 53.5 L542.0 46.0 L545.0 38.3 L548.0 30.4 L551.0 22.3 L554.0 14.0 L557.0 5.4 L560.0 -3.3 L563.0 -12.3 L566.0 -21.6 L569.0 -31.1 L572.0 -40.9 L575.0 -50.9 L578.0 -61.2 L581.0 -71.8 L584.0 -82.6 L587.0 -93.8 L590.0 -105.2 L593.0 -116.9 L596.0 -129.0 L599.0 -141.3 L602.0 -154.0 L605.0 -167.1 L605.0 -57.6 L602.0 -44.5 L599.0 -31.8 L596.0 -19.5 L593.0 -7.4 L590.0 4.3 L587.0 15.7 L584.0 26.9 L581.0 37.7 L578.0 48.3 L575.0 58.6 L572.0 68.6 L569.0 78.4 L566.0 87.9 L563.0 97.2 L560.0 106.2 L557.0 114.9 L554.0 123.5 L551.0 131.8 L548.0 139.9 L545.0 147.8 L542.0 155.5 L539.0 163.0 L536.0 170.3 L533.0 177.3 L530.0 184.2 L527.0 190.9 L524.0 197.5 L521.0 203.8 L518.0 210.0 L515.0 216.0 L512.0 221.9 L509.0 227.5 L506.0 233.1 L503.0 238.5 L500.0 243.7 L497.0 248.8 L494.0 253.7 L491.0 258.5 L488.0 263.2 L485.0 267.8 L482.0 272.2 L479.0 276.5 L476.0 280.6 L473.0 284.7 L470.0 288.6 L467.0 292.4 L464.0 296.1 L461.0 299.7 L458.0 303.2 L455.0 306.6 L452.0 309.8 L449.0 313.0 L446.0 316.1 L443.0 319.1 L440.0 322.0 L437.0 324.8 L434.0 327.5 L431.0 330.1 L428.0 332.6 L425.0 335.1 L422.0 337.4 L419.0 339.7 L416.0 341.9 L413.0 344.0 L410.0 346.1 L407.0 348.1 L404.0 350.0 L401.0 351.8 L398.0 353.5 L395.0 355.2 L392.0 356.8 L389.0 358.4 L386.0 359.9 L383.0 361.3 L380.0 362.6 L377.0 363.9 L374.0 365.1 L371.0 366.3 L368.0 367.3 L365.0 368.4 L362.0 369.4 L359.0 370.3 L356.0 371.1 L353.0 371.9 L350.0 372.6 L347.0 373.3 L344.0 374.0 L341.0 374.5 L338.0 375.0 L335.0 375.5 L332.0 375.9 L329.0 376.2 L326.0 376.5 L323.0 376.8 L320.0 377.0 L317.0 377.1 L314.0 377.2 L311.0 377.2 L308.0 377.2 L305.0 377.1 L302.0 377.0 L299.0 376.8 L296.0 376.6 L293.0 376.3 L290.0 375.9 L287.0 375.5 L284.0 375.1 L281.0 374.6 L278.0 374.1 L275.0 373.5 L272.0 372.8 L269.0 372.1 L266.0 371.3 L263.0 370.5 L260.0 369.7 L257.0 368.7 L254.0 367.8 L251.0 366.7 L248.0 365.7 L245.0 364.5 L242.0 363.3 L239.0 362.1 L236.0 360.7 L233.0 359.4 L230.0 357.9 L227.0 356.5 L224.0 354.9 L221.0 353.3 L218.0 351.6 L215.0 349.9 L212.0 348.1 L209.0 346.2 L206.0 344.3 L203.0 342.3 L200.0 340.2 L197.0 338.1 L194.0 335.9 L191.0 333.6 L188.0 331.2 L185.0 328.8 L182.0 326.3 L179.0 323.7 L176.0 321.0 L173.0 318.3 L170.0 315.5 L167.0 312.6 L164.0 309.6 L161.0 306.5 L158.0 303.3 L155.0 300.1 L152.0 296.7 L149.0 293.3 L146.0 289.7 L143.0 286.1 L140.0 282.4 L137.0 278.5 L134.0 274.6 L131.0 270.5 L128.0 266.3 L125.0 262.0 L122.0 257.6 L119.0 253.1 L116.0 248.4 L113.0 243.7 L110.0 238.8 L107.0 233.7 L104.0 228.6 L101.0 223.2 L98.0 217.8 L95.0 212.2 L92.0 206.4 L89.0 200.5 L86.0 194.5 L83.0 188.3 L80.0 181.9 L77.0 175.3 L74.0 168.6 L71.0 161.7 L68.0 154.6 L65.0 147.3 L62.0 139.8 L59.0 132.2 L56.0 124.3 L53.0 116.2 L50.0 107.9 L47.0 99.4 L44.0 90.7 L41.0 81.7 L38.0 72.5 L35.0 63.1 L32.0 53.4 L29.0 43.4 L26.0 33.2 L23.0 22.7 L20.0 12.0 L17.0 0.9 L14.0 -10.4 L11.0 -22.0 L8.0 -34.0 L5.0 -46.2 L2.0 -58.8 L-1.0 -71.6 L-4.0 -84.9 L-7.0 -98.4 L-10.0 -112.4Z"/></clipPath></defs>
<rect x="0" y="0" width="595" height="462" fill="url(#sp)" clip-path="url(#bc)"/>
<rect x="376" y="341" width="134" height="21" fill="#000"/>
<circle cx="75.3" cy="116.4" r="3.6" fill="#ff2020"/>
<text x="62.8" y="111.1" fill="#d42828" font-size="12.5">1.Max</text>
<circle cx="456.8" cy="248.4" r="3.6" fill="#ff2020"/>
<text x="441.4" y="243.1" fill="#d42828" font-size="12.5"><tspan letter-spacing="1.3">−</tspan>1.Max</text>
<text x="261.7" y="313.2" fill="#d42828" font-size="12.5" style="mix-blend-mode:lighten">0.Max</text>
<path d="M32 0h1v1h-1zM576 0h1v1h-1zM33 1h1v3h-1zM575 1h1v3h-1zM34 4h1v4h-1zM574 4h1v3h-1zM573 7h1v4h-1zM35 8h1v3h-1zM36 11h1v3h-1zM572 11h1v3h-1zM37 14h1v3h-1zM571 14h1v3h-1zM38 17h1v3h-1zM570 17h1v3h-1zM39 20h1v3h-1zM569 20h1v4h-1zM40 23h1v3h-1zM568 24h1v3h-1zM41 26h1v3h-1zM567 27h1v3h-1zM42 29h1v3h-1zM566 30h1v3h-1zM43 32h1v3h-1zM565 33h1v3h-1zM44 35h1v3h-1zM564 36h1v3h-1zM45 38h1v3h-1zM563 39h1v3h-1zM46 41h1v3h-1zM562 42h1v4h-1zM47 44h1v3h-1zM561 46h1v3h-1zM48 47h1v3h-1zM560 49h1v3h-1zM49 50h1v2h-1zM50 52h1v3h-1zM559 52h1v2h-1zM558 54h1v3h-1zM51 55h1v3h-1zM557 57h1v3h-1zM52 58h1v3h-1zM556 60h1v3h-1zM53 61h1v2h-1zM54 63h1v3h-1zM555 63h1v3h-1zM55 66h1v3h-1zM554 66h1v3h-1zM56 69h1v2h-1zM553 69h1v3h-1zM57 71h1v3h-1zM552 72h1v2h-1zM58 74h1v3h-1zM551 74h1v3h-1zM59 77h1v2h-1zM550 77h1v3h-1zM60 79h1v3h-1zM549 80h1v3h-1zM61 82h1v2h-1zM548 83h1v2h-1zM62 84h1v3h-1zM547 85h1v3h-1zM63 87h1v2h-1zM546 88h1v3h-1zM64 89h1v3h-1zM545 91h1v2h-1zM65 92h1v2h-1zM544 93h1v3h-1zM66 94h1v3h-1zM543 96h1v2h-1zM67 97h1v2h-1zM542 98h1v3h-1zM68 99h1v2h-1zM69 101h1v3h-1zM541 101h1v2h-1zM540 103h1v3h-1zM70 104h1v2h-1zM71 106h1v3h-1zM539 106h1v2h-1zM538 108h1v3h-1zM72 109h1v2h-1zM73 111h1v2h-1zM537 111h1v2h-1zM74 113h1v2h-1zM536 113h1v3h-1zM75 115h1v3h-1zM535 116h1v2h-1zM76 118h1v2h-1zM534 118h1v2h-1zM77 120h1v2h-1zM533 120h1v3h-1zM78 122h1v2h-1zM532 123h1v2h-1zM79 124h1v2h-1zM531 125h1v2h-1zM80 126h1v3h-1zM530 127h1v3h-1zM81 129h1v2h-1zM529 130h1v2h-1zM82 131h1v2h-1zM528 132h1v2h-1zM83 133h1v2h-1zM527 134h1v2h-1zM84 135h1v2h-1zM526 136h1v3h-1zM85 137h1v2h-1zM86 139h1v2h-1zM525 139h1v2h-1zM87 141h1v2h-1zM524 141h1v2h-1zM88 143h1v2h-1zM523 143h1v2h-1zM89 145h1v2h-1zM522 145h1v2h-1zM90 147h1v2h-1zM521 147h1v2h-1zM91 149h1v2h-1zM520 149h1v2h-1zM92 151h1v2h-1zM519 151h1v2h-1zM93 153h1v2h-1zM518 153h1v2h-1zM94 155h1v2h-1zM517 155h1v2h-1zM95 157h1v2h-1zM516 157h1v2h-1zM96 159h1v1h-1zM515 159h1v2h-1zM97 160h1v2h-1zM514 161h1v2h-1zM98 162h1v2h-1zM513 163h1v2h-1zM99 164h1v2h-1zM512 165h1v2h-1zM100 166h1v2h-1zM511 167h1v2h-1zM101 168h1v2h-1zM510 169h1v2h-1zM102 170h1v1h-1zM103 171h1v2h-1zM509 171h1v2h-1zM104 173h1v2h-1zM508 173h1v2h-1zM105 175h1v2h-1zM507 175h1v2h-1zM106 177h1v1h-1zM506 177h1v1h-1zM107 178h1v2h-1zM505 178h1v2h-1zM108 180h1v2h-1zM504 180h1v2h-1zM109 182h1v1h-1zM503 182h1v2h-1zM110 183h1v2h-1zM502 184h1v2h-1zM111 185h1v2h-1zM501 186h1v1h-1zM112 187h1v1h-1zM500 187h1v2h-1zM113 188h1v2h-1zM499 189h1v2h-1zM114 190h1v1h-1zM115 191h1v2h-1zM498 191h1v2h-1zM116 193h1v2h-1zM497 193h1v1h-1zM496 194h1v2h-1zM117 195h1v1h-1zM118 196h1v2h-1zM495 196h1v2h-1zM119 198h1v1h-1zM494 198h1v1h-1zM120 199h1v2h-1zM493 199h1v2h-1zM121 201h1v1h-1zM492 201h1v1h-1zM122 202h1v2h-1zM491 202h1v2h-1zM123 204h1v1h-1zM490 204h1v2h-1zM124 205h1v2h-1zM489 206h1v1h-1zM125 207h1v1h-1zM488 207h1v2h-1zM126 208h1v1h-1zM127 209h1v2h-1zM487 209h1v1h-1zM486 210h1v2h-1zM128 211h1v1h-1zM129 212h1v2h-1zM485 212h1v1h-1zM484 213h1v2h-1zM130 214h1v1h-1zM131 215h1v1h-1zM483 215h1v1h-1zM132 216h1v2h-1zM482 216h1v2h-1zM133 218h1v1h-1zM481 218h1v1h-1zM134 219h1v1h-1zM480 219h1v1h-1zM135 220h1v2h-1zM479 220h1v2h-1zM136 222h1v1h-1zM478 222h1v1h-1zM137 223h1v1h-1zM477 223h1v2h-1zM138 224h1v2h-1zM476 225h1v1h-1zM139 226h1v1h-1zM475 226h1v1h-1zM140 227h1v1h-1zM474 227h1v2h-1zM141 228h1v1h-1zM142 229h1v2h-1zM473 229h1v1h-1zM472 230h1v1h-1zM143 231h1v1h-1zM471 231h1v2h-1zM144 232h1v1h-1zM145 233h1v1h-1zM470 233h1v1h-1zM146 234h1v1h-1zM469 234h1v1h-1zM147 235h1v2h-1zM468 235h1v2h-1zM148 237h1v1h-1zM467 237h1v1h-1zM149 238h1v1h-1zM466 238h1v1h-1zM150 239h1v1h-1zM465 239h1v1h-1zM151 240h1v1h-1zM464 240h1v2h-1zM152 241h1v1h-1zM153 242h1v1h-1zM463 242h1v1h-1zM154 243h1v2h-1zM462 243h1v1h-1zM461 244h1v1h-1zM155 245h1v1h-1zM460 245h1v1h-1zM156 246h1v1h-1zM459 246h1v1h-1zM157 247h1v1h-1zM458 247h1v2h-1zM158 248h1v1h-1zM159 249h1v1h-1zM457 249h1v1h-1zM160 250h1v1h-1zM456 250h1v1h-1zM161 251h1v1h-1zM455 251h1v1h-1zM162 252h1v1h-1zM454 252h1v1h-1zM163 253h1v1h-1zM453 253h1v1h-1zM164 254h1v1h-1zM452 254h1v1h-1zM165 255h1v1h-1zM451 255h1v1h-1zM166 256h1v1h-1zM450 256h1v1h-1zM167 257h1v1h-1zM449 257h1v1h-1zM168 258h1v1h-1zM448 258h1v2h-1zM169 259h1v1h-1zM170 260h1v1h-1zM447 260h1v1h-1zM171 261h1v1h-1zM446 261h1v1h-1zM172 262h1v1h-1zM445 262h1v1h-1zM173 263h1v1h-1zM444 263h1v1h-1zM174 264h1v1h-1zM443 264h1v1h-1zM175 265h1v1h-1zM441 265h2v1h-2zM176 266h1v1h-1zM440 266h1v1h-1zM177 267h1v1h-1zM439 267h1v1h-1zM178 268h1v1h-1zM438 268h1v1h-1zM179 269h1v1h-1zM437 269h1v1h-1zM180 270h1v1h-1zM436 270h1v1h-1zM181 271h1v1h-1zM435 271h1v1h-1zM182 272h2v1h-2zM434 272h1v1h-1zM184 273h1v1h-1zM433 273h1v1h-1zM185 274h1v1h-1zM432 274h1v1h-1zM186 275h1v1h-1zM430 275h2v1h-2zM187 276h2v1h-2zM429 276h1v1h-1zM189 277h1v1h-1zM428 277h1v1h-1zM190 278h1v1h-1zM427 278h1v1h-1zM191 279h1v1h-1zM426 279h1v1h-1zM192 280h2v1h-2zM424 280h2v1h-2zM194 281h1v1h-1zM423 281h1v1h-1zM195 282h1v1h-1zM422 282h1v1h-1zM196 283h2v1h-2zM420 283h2v1h-2zM198 284h1v1h-1zM419 284h1v1h-1zM199 285h2v1h-2zM418 285h1v1h-1zM201 286h1v1h-1zM416 286h2v1h-2zM202 287h2v1h-2zM415 287h1v1h-1zM204 288h1v1h-1zM414 288h1v1h-1zM205 289h2v1h-2zM412 289h2v1h-2zM207 290h1v1h-1zM411 290h1v1h-1zM208 291h2v1h-2zM409 291h2v1h-2zM210 292h1v1h-1zM408 292h1v1h-1zM211 293h2v1h-2zM406 293h2v1h-2zM213 294h2v1h-2zM404 294h2v1h-2zM215 295h1v1h-1zM403 295h1v1h-1zM216 296h2v1h-2zM401 296h2v1h-2zM218 297h2v1h-2zM399 297h2v1h-2zM220 298h2v1h-2zM398 298h1v1h-1zM222 299h2v1h-2zM396 299h2v1h-2zM224 300h2v1h-2zM394 300h2v1h-2zM226 301h2v1h-2zM392 301h2v1h-2zM228 302h2v1h-2zM390 302h2v1h-2zM230 303h2v1h-2zM388 303h2v1h-2zM232 304h2v1h-2zM386 304h2v1h-2zM234 305h2v1h-2zM384 305h2v1h-2zM236 306h2v1h-2zM382 306h2v1h-2zM238 307h3v1h-3zM380 307h2v1h-2zM241 308h2v1h-2zM377 308h3v1h-3zM243 309h3v1h-3zM375 309h2v1h-2zM246 310h2v1h-2zM372 310h3v1h-3zM248 311h3v1h-3zM369 311h3v1h-3zM251 312h3v1h-3zM367 312h2v1h-2zM254 313h3v1h-3zM364 313h3v1h-3zM257 314h4v1h-4zM360 314h4v1h-4zM261 315h3v1h-3zM357 315h3v1h-3zM264 316h4v1h-4zM353 316h4v1h-4zM268 317h4v1h-4zM349 317h4v1h-4zM272 318h5v1h-5zM344 318h5v1h-5zM277 319h6v1h-6zM339 319h5v1h-5zM283 320h7v1h-7zM332 320h7v1h-7zM290 321h12v1h-12zM320 321h12v1h-12zM302 322h18v1h-18z" fill="#fff" shape-rendering="crispEdges"/>
<path d="M5 318.5 H546.0" stroke="#fff" stroke-width="1" fill="none"/>
<path d="M546.0 10.0 V455.0" stroke="#fff" stroke-width="1" fill="none"/>
<path d="M12.5 318.5 v1.5 M19.5 318.5 v4.0 M27.5 318.5 v1.5 M34.5 318.5 v1.5 M41.5 318.5 v1.5 M48.5 318.5 v1.5 M56.5 318.5 v4.0 M63.5 318.5 v1.5 M70.5 318.5 v1.5 M77.5 318.5 v1.5 M85.5 318.5 v1.5 M92.5 318.5 v4.0 M99.5 318.5 v1.5 M106.5 318.5 v1.5 M114.5 318.5 v1.5 M121.5 318.5 v1.5 M128.5 318.5 v4.0 M135.5 318.5 v1.5 M143.5 318.5 v1.5 M150.5 318.5 v1.5 M157.5 318.5 v1.5 M164.5 318.5 v4.0 M172.5 318.5 v1.5 M179.5 318.5 v1.5 M186.5 318.5 v1.5 M193.5 318.5 v1.5 M201.5 318.5 v4.0 M208.5 318.5 v1.5 M215.5 318.5 v1.5 M222.5 318.5 v1.5 M230.5 318.5 v1.5 M237.5 318.5 v4.0 M244.5 318.5 v1.5 M251.5 318.5 v1.5 M259.5 318.5 v1.5 M266.5 318.5 v1.5 M273.5 318.5 v4.0 M280.5 318.5 v1.5 M288.5 318.5 v1.5 M295.5 318.5 v1.5 M302.5 318.5 v1.5 M309.5 318.5 v4.0 M317.5 318.5 v1.5 M324.5 318.5 v1.5 M331.5 318.5 v1.5 M338.5 318.5 v1.5 M346.5 318.5 v4.0 M353.5 318.5 v1.5 M360.5 318.5 v1.5 M367.5 318.5 v1.5 M375.5 318.5 v1.5 M382.5 318.5 v4.0 M389.5 318.5 v1.5 M396.5 318.5 v1.5 M404.5 318.5 v1.5 M411.5 318.5 v1.5 M418.5 318.5 v4.0 M425.5 318.5 v1.5 M433.5 318.5 v1.5 M440.5 318.5 v1.5 M447.5 318.5 v1.5 M454.5 318.5 v4.0 M462.5 318.5 v1.5 M469.5 318.5 v1.5 M476.5 318.5 v1.5 M483.5 318.5 v1.5 M491.5 318.5 v4.0 M498.5 318.5 v1.5 M505.5 318.5 v1.5 M512.5 318.5 v1.5 M520.5 318.5 v1.5 M527.5 318.5 v4.0 M534.5 318.5 v1.5 M541.5 318.5 v1.5 M546.0 454.0 h5.0 M546.0 450.6 h1.5 M546.0 447.2 h1.5 M546.0 443.8 h1.5 M546.0 440.4 h1.5 M546.0 437.1 h1.5 M546.0 433.7 h1.5 M546.0 430.3 h1.5 M546.0 426.9 h1.5 M546.0 423.5 h1.5 M546.0 420.1 h5.0 M546.0 416.7 h1.5 M546.0 413.4 h1.5 M546.0 410.0 h1.5 M546.0 406.6 h1.5 M546.0 403.2 h1.5 M546.0 399.8 h1.5 M546.0 396.4 h1.5 M546.0 393.0 h1.5 M546.0 389.6 h1.5 M546.0 386.2 h5.0 M546.0 382.9 h1.5 M546.0 379.5 h1.5 M546.0 376.1 h1.5 M546.0 372.7 h1.5 M546.0 369.3 h1.5 M546.0 365.9 h1.5 M546.0 362.5 h1.5 M546.0 359.1 h1.5 M546.0 355.8 h1.5 M546.0 352.4 h5.0 M546.0 349.0 h1.5 M546.0 345.6 h1.5 M546.0 342.2 h1.5 M546.0 338.8 h1.5 M546.0 335.4 h1.5 M546.0 332.1 h1.5 M546.0 328.7 h1.5 M546.0 325.3 h1.5 M546.0 321.9 h1.5 M546.0 318.5 h5.0 M546.0 315.1 h1.5 M546.0 311.7 h1.5 M546.0 308.3 h1.5 M546.0 304.9 h1.5 M546.0 301.6 h1.5 M546.0 298.2 h1.5 M546.0 294.8 h1.5 M546.0 291.4 h1.5 M546.0 288.0 h1.5 M546.0 284.6 h5.0 M546.0 281.2 h1.5 M546.0 277.9 h1.5 M546.0 274.5 h1.5 M546.0 271.1 h1.5 M546.0 267.7 h1.5 M546.0 264.3 h1.5 M546.0 260.9 h1.5 M546.0 257.5 h1.5 M546.0 254.1 h1.5 M546.0 250.8 h5.0 M546.0 247.4 h1.5 M546.0 244.0 h1.5 M546.0 240.6 h1.5 M546.0 237.2 h1.5 M546.0 233.8 h1.5 M546.0 230.4 h1.5 M546.0 227.0 h1.5 M546.0 223.6 h1.5 M546.0 220.3 h1.5 M546.0 216.9 h5.0 M546.0 213.5 h1.5 M546.0 210.1 h1.5 M546.0 206.7 h1.5 M546.0 203.3 h1.5 M546.0 199.9 h1.5 M546.0 196.6 h1.5 M546.0 193.2 h1.5 M546.0 189.8 h1.5 M546.0 186.4 h1.5 M546.0 183.0 h5.0 M546.0 179.6 h1.5 M546.0 176.2 h1.5 M546.0 172.8 h1.5 M546.0 169.4 h1.5 M546.0 166.1 h1.5 M546.0 162.7 h1.5 M546.0 159.3 h1.5 M546.0 155.9 h1.5 M546.0 152.5 h1.5 M546.0 149.1 h5.0 M546.0 145.7 h1.5 M546.0 142.3 h1.5 M546.0 139.0 h1.5 M546.0 135.6 h1.5 M546.0 132.2 h1.5 M546.0 128.8 h1.5 M546.0 125.4 h1.5 M546.0 122.0 h1.5 M546.0 118.6 h1.5 M546.0 115.2 h5.0 M546.0 111.9 h1.5 M546.0 108.5 h1.5 M546.0 105.1 h1.5 M546.0 101.7 h1.5 M546.0 98.3 h1.5 M546.0 94.9 h1.5 M546.0 91.5 h1.5 M546.0 88.1 h1.5 M546.0 84.8 h1.5 M546.0 81.4 h5.0 M546.0 78.0 h1.5 M546.0 74.6 h1.5 M546.0 71.2 h1.5 M546.0 67.8 h1.5 M546.0 64.4 h1.5 M546.0 61.1 h1.5 M546.0 57.7 h1.5 M546.0 54.3 h1.5 M546.0 50.9 h1.5 M546.0 47.5 h5.0 M546.0 44.1 h1.5 M546.0 40.7 h1.5 M546.0 37.3 h1.5 M546.0 33.9 h1.5 M546.0 30.6 h1.5 M546.0 27.2 h1.5 M546.0 23.8 h1.5 M546.0 20.4 h1.5 M546.0 17.0 h1.5 M546.0 13.6 h5.0" stroke="#fff" stroke-width="1" fill="none"/>
<path d="M536.0 313.0 l9 5.5 l-9 5.5" stroke="#fff" stroke-width="1" fill="none"/>
<path d="M541.5 18.0 l4.5 -8 l4.5 8" stroke="#fff" stroke-width="1" fill="none"/>
<text x="18.0" y="334.0" text-anchor="middle"><tspan letter-spacing="1.3">−</tspan>35</text>
<text x="54.2" y="334.0" text-anchor="middle"><tspan letter-spacing="1.3">−</tspan>30</text>
<text x="90.5" y="334.0" text-anchor="middle"><tspan letter-spacing="1.3">−</tspan>25</text>
<text x="126.7" y="334.0" text-anchor="middle"><tspan letter-spacing="1.3">−</tspan>20</text>
<text x="163.0" y="334.0" text-anchor="middle"><tspan letter-spacing="1.3">−</tspan>15</text>
<text x="199.2" y="334.0" text-anchor="middle"><tspan letter-spacing="1.3">−</tspan>10</text>
<text x="235.5" y="334.0" text-anchor="middle"><tspan letter-spacing="1.3">−</tspan>5</text>
<text x="308.5" y="334.0" text-anchor="middle">5</text>
<text x="344.7" y="334.0" text-anchor="middle">10</text>
<text x="381.0" y="334.0" text-anchor="middle">15</text>
<text x="417.2" y="334.0" text-anchor="middle">20</text>
<text x="453.5" y="334.0" text-anchor="middle">25</text>
<text x="489.7" y="334.0" text-anchor="middle">30</text>
<text x="526.0" y="334.0" text-anchor="middle">35</text>
<text x="553.0" y="455.1"><tspan letter-spacing="1.3">−</tspan>10</text>
<text x="553.0" y="421.2"><tspan letter-spacing="1.3">−</tspan>7,5</text>
<text x="553.0" y="387.4"><tspan letter-spacing="1.3">−</tspan>5</text>
<text x="553.0" y="353.5"><tspan letter-spacing="1.3">−</tspan>2,5</text>
<text x="553.0" y="319.6">0</text>
<text x="553.0" y="285.7">2,5</text>
<text x="553.0" y="251.8">5</text>
<text x="553.0" y="218.0">7,5</text>
<text x="553.0" y="184.1">10</text>
<text x="553.0" y="150.2">12,5</text>
<text x="553.0" y="116.3">15</text>
<text x="553.0" y="82.5">17,5</text>
<text x="553.0" y="48.6">20</text>
<text x="553.0" y="14.7">22,5</text>
<circle cx="111.4" cy="186.0" r="3.6" fill="#90ff40"/>
<text x="98.9" y="180.7" fill="#a0f060" font-size="12.5">1.Max</text>
<circle cx="139.7" cy="227.2" r="3.6" fill="#0a80ff"/>
<text x="127.2" y="221.9" fill="#3468c8" font-size="12.5">1.Max</text>
<circle cx="402.3" cy="295.7" r="3.6" fill="#0a80ff"/>
<text x="386.9" y="290.4" fill="#3468c8" font-size="12.5"><tspan letter-spacing="1.3">−</tspan>1.Max</text>
<circle cx="427.6" cy="277.8" r="3.6" fill="#90ff40"/>
<text x="412.2" y="272.5" fill="#b8e060" font-size="12.5"><tspan letter-spacing="1.3">−</tspan>1.Max</text>
<circle cx="548.8" cy="82.3" r="3.6" fill="#0a80ff"/>
<text x="533.4" y="77.0" fill="#3468c8" font-size="12.5"><tspan letter-spacing="1.3">−</tspan>2.Max</text>
<path d="M353 401 H358 C368 401 375 412 374.6 422 L353.5 481.5 Z" fill="#008000" transform="translate(-272 -51)"/>
<path d="M108.5 358.3 L81.9 430.0 M116.5 358.3 L90.8 432.3 M124.6 358.3 L99.7 432.3 M132.6 358.3 L108.5 432.3 M140.6 358.3 L117.4 432.3 M148.6 358.3 L126.3 432.3 M156.7 358.3 L135.2 432.3 M164.7 358.3 L144.1 432.3 M172.7 358.3 L152.9 432.3 M180.8 358.3 L161.8 432.3 M188.8 358.3 L170.7 432.3 M196.8 358.3 L179.6 432.3" stroke="#fff" stroke-width="1" fill="none"/>
<path d="M423.5 483.6 H481" stroke="#000090" stroke-width="2" transform="translate(-272 -51)"/>
<path d="M464 483.6 H481" stroke="#0000d0" stroke-width="2" transform="translate(-272 -51)"/>
<path d="M360.8 499 L414 443.5" stroke="#e81818" stroke-width="4" transform="translate(-272 -51)"/>
<text x="232" y="10.5" font-size="12.2">Intensität über dem Winkel</text>
<text x="401" y="27.5" font-size="12.5" letter-spacing="0.1">Vertikaler Winkel in °</text>
<text x="377" y="357" font-size="12.5">Horizontaler Winkel in °</text>
</svg>
<div class="abs" style="left:272px;top:50px;width:596px;height:1px;background:#fff"></div>
<!-- right tall button -->
<div class="btn" style="left:872px;top:52px;width:24px;height:469px;background:linear-gradient(to right,#f8f9f7 0%,#f1f2ee 70%,#e4e6e0 100%)"></div>

<!-- bottom heading -->
<div class="etch" style="left:4px;top:525px;width:243px"></div>
<div class="etch" style="left:653px;top:525px;width:243px"></div>
<div class="abs bh" style="left:257.5px;letter-spacing:0.12px">Jede Wellenlänge einzeln</div><div class="abs bh" style="left:425.5px;letter-spacing:1.5px">---</div><div class="abs bh" style="left:448.3px;letter-spacing:0.3px">Zurzeit Wellenlänge 2 gewählt</div>

<div class="gb" style="left:6px;top:545px;width:279px;height:133px"><div class="l">Angezeigt wird:</div></div>
<div class="cb" style="left:24px;top:581px"></div><div class="lb" style="left:40px;top:582px;letter-spacing:-0.3px">Einfachspalt</div>
<div class="cb" style="left:24px;top:605px"></div><div class="lb" style="left:39px;top:606px;letter-spacing:-0.1px">(Gitter ohne Einzelspaltüberlagerung)</div>
<div class="cb" style="left:24px;top:629px"></div><div class="lb" style="left:40px;top:630px;letter-spacing:-0.3px">reales Gitter</div>
<div class="cb" style="left:24px;top:653px"><svg class="abs" style="left:1px;top:1px" width="9" height="9"><path d="M1 4 L3.5 6.5 L8 1.5" stroke="#21a121" stroke-width="2" fill="none"/></svg></div><div class="lb" style="left:40px;top:654px;letter-spacing:-0.3px">Schirmbild</div>

<div class="gb" style="left:296px;top:545px;width:276px;height:133px"><div class="l">Wellenlänge verändern</div></div>
<div class="lb" style="left:312px;top:583px">Wellenlänge</div>
<div class="lb" style="left:312px;top:607px">Frequenz</div>
<div class="inp" style="left:394px;top:582px;width:77px;height:23px">461</div>
<div class="inp" style="left:394px;top:606px;width:77px;height:23px">650E12</div>
<div class="lb" style="left:472px;top:587px">nm</div>
<div class="lb" style="left:472px;top:611px">Hz</div>
<div class="lb" style="left:304px;top:634px">Wellenlänge</div>
<div class="trk" style="left:312px;top:655px;width:247px"></div>
<svg class="th" style="left:360px;top:647px" viewBox="0 0 11 21"><path d="M0.5 2.5 Q0.5 0.5 2.5 0.5 H8.5 Q10.5 0.5 10.5 2.5 V15 L5.5 20.5 L0.5 15 Z" fill="#f4f3ee" stroke="#778a77"/><path d="M1 3 V1.5 Q1 1 2 1 H9 Q10 1 10 1.5 V3.5 H1Z" fill="#3fb843"/><path d="M1.2 15.2 L5.5 19.8 L9.8 15.2" stroke="#3fa043" fill="none" stroke-width="1.4"/></svg>

<div class="gb" style="left:580px;top:547px;width:312px;height:135px;border-bottom-color:transparent"><div class="l" style="letter-spacing:-0.08px">Mehrere Wellenlängen   Aktuelle Anzahl: 3</div></div>
<div class="abs" style="left:582px;top:566px;width:308px;height:59px;background:#fff;border:1px solid #7f9db9"></div>
<div class="abs lb" style="left:584px;top:568px;width:304px;height:15px;background:#ff0000;color:#800000;padding-left:2px;line-height:17px;overflow:hidden;white-space:pre">Wellenlänge 0     (649nm)</div>
<div class="abs lb" style="left:584px;top:583px;width:304px;height:15px;background:#8cff00;color:#000;padding-left:2px;line-height:17px;overflow:hidden;white-space:pre">Wellenlänge 1     (548nm)</div>
<div class="abs lb" style="left:584px;top:598px;width:304px;height:15px;background:#0a78ff;color:#fff;padding-left:2px;line-height:17px;overflow:hidden;white-space:pre">Wellenlänge 2     (461nm)</div>
<div class="btn r" style="left:583px;top:627px;width:306px;height:25px;line-height:23px">Erstelle neue Wellenlänge</div>
<div class="btn r" style="left:583px;top:654px;width:306px;height:25px;line-height:23px">Lösche letzte Wellenlänge</div>
</body></html>
